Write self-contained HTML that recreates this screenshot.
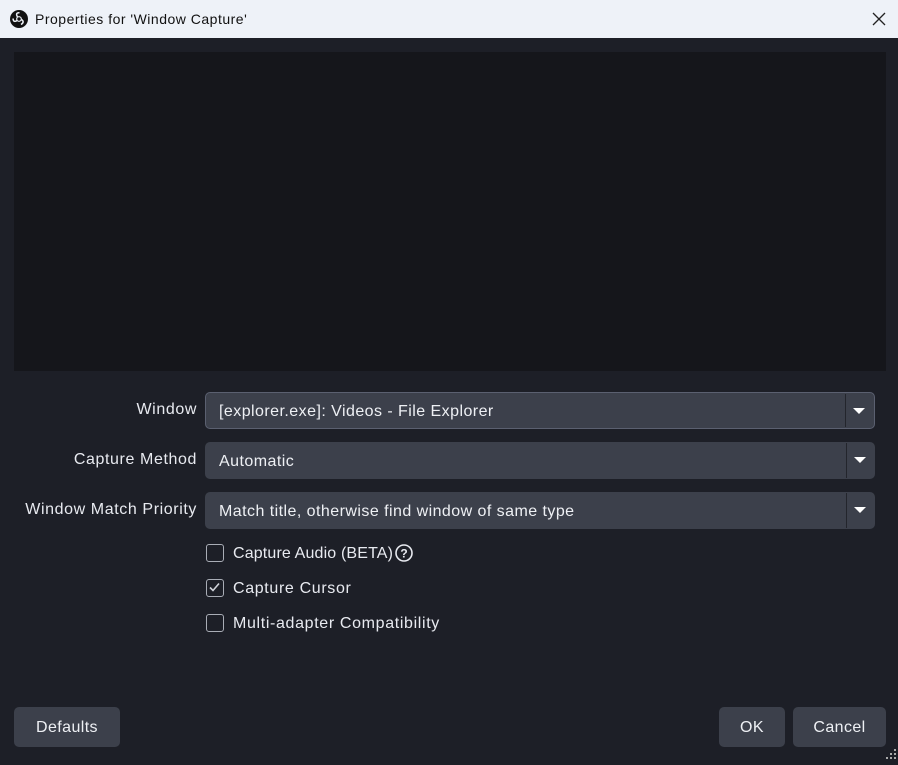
<!DOCTYPE html>
<html><head><style>
*{margin:0;padding:0;box-sizing:border-box}
body{width:898px;height:765px;background:#1d1f27;font-family:"Liberation Sans",sans-serif;position:relative;overflow:hidden;color:#e6e8ee}
.title{position:absolute;left:0;top:0;width:898px;height:38px;background:#eef2f8;color:#111;font-size:14px}
.title .t{position:absolute;left:35px;top:11px;letter-spacing:0.5px}
.logo{position:absolute;left:10px;top:10px;width:18px;height:18px}
.close{position:absolute;left:872px;top:12px;width:14px;height:14px}
.prev{position:absolute;left:14px;top:52px;width:872px;height:319px;background:#15161b}
.lbl{position:absolute;right:701px;font-size:16px;color:#e8eaf0;letter-spacing:0.6px}
.combo{position:absolute;left:205px;width:670px;height:37px;background:#3c404b;border-radius:5px;font-size:16px;padding:11px 0 0 14px;color:#eef0f4;letter-spacing:0.45px}
.combo.f{border:1px solid #5b6070;padding:10px 0 0 13px}
.combo .sep{position:absolute;right:28px;top:1px;bottom:1px;width:1px;background:#23252c}
.combo .arr{position:absolute;right:9px;top:15px;width:0;height:0;border-left:6px solid transparent;border-right:6px solid transparent;border-top:6px solid #fff}
.cb{position:absolute;left:206px;width:18px;height:18px;border:1.5px solid #a9adb6;border-radius:3px}
.ct{position:absolute;left:233px;font-size:16px;color:#e8eaf0;letter-spacing:0.65px}
.btn{position:absolute;top:707px;height:40px;background:#3c404b;border-radius:5px;font-size:16px;text-align:center;line-height:42px;color:#eef0f4;letter-spacing:0.4px}
</style></head><body>
<div class="title"><svg class="logo" viewBox="0 0 18 18"><circle cx="9" cy="9" r="9" fill="#111"/><circle cx="9" cy="9" r="2.3" fill="none" stroke="#eef2f8" stroke-width="1.2"/><path d="M7.5 7 Q5 2.5 9.5 2.8 M11.5 9.5 Q15 12 11 14.5 M7 10.5 Q3.5 13 3 8.5" stroke="#eef2f8" stroke-width="1.5" fill="none"/></svg><span class="t">Properties for 'Window Capture'</span>
<svg class="close" viewBox="0 0 14 14"><path d="M1 1L13 13M13 1L1 13" stroke="#222" stroke-width="1.3"/></svg></div>
<div class="prev"></div>
<div class="lbl" style="top:401px">Window</div>
<div class="combo f" style="top:392px">[explorer.exe]: Videos - File Explorer<div class="sep"></div><div class="arr"></div></div>
<div class="lbl" style="top:451px">Capture Method</div>
<div class="combo" style="top:442px">Automatic<div class="sep"></div><div class="arr"></div></div>
<div class="lbl" style="top:501px">Window Match Priority</div>
<div class="combo" style="top:492px">Match title, otherwise find window of same type<div class="sep"></div><div class="arr"></div></div>
<div class="cb" style="top:544px"></div><div class="ct" style="top:545px;letter-spacing:0.15px">Capture Audio (BETA)</div>
<svg style="position:absolute;left:395px;top:544px" width="18" height="18" viewBox="0 0 18 18"><circle cx="9" cy="9" r="8" fill="none" stroke="#e8eaf0" stroke-width="1.6"/><text x="9" y="13.5" font-size="12" font-weight="bold" text-anchor="middle" fill="#e8eaf0" font-family="Liberation Sans">?</text></svg>
<div class="cb" style="top:579px"><svg width="15" height="15" viewBox="0 0 15 15" style="position:absolute;left:0;top:0"><path d="M3 7.5L6 10.5L12 3.5" stroke="#d0d3da" stroke-width="1.6" fill="none"/></svg></div><div class="ct" style="top:580px">Capture Cursor</div>
<div class="cb" style="top:614px"></div><div class="ct" style="top:615px">Multi-adapter Compatibility</div>
<div class="btn" style="left:14px;width:106px">Defaults</div>
<div class="btn" style="left:719px;width:66px">OK</div>
<div class="btn" style="left:793px;width:93px">Cancel</div>
<svg style="position:absolute;left:886px;top:749px" width="12" height="12"><g fill="#aaa"><rect x="8" y="0" width="2" height="2"/><rect x="4" y="4" width="2" height="2"/><rect x="8" y="4" width="2" height="2"/><rect x="0" y="8" width="2" height="2"/><rect x="4" y="8" width="2" height="2"/><rect x="8" y="8" width="2" height="2"/></g></svg>
</body></html>
